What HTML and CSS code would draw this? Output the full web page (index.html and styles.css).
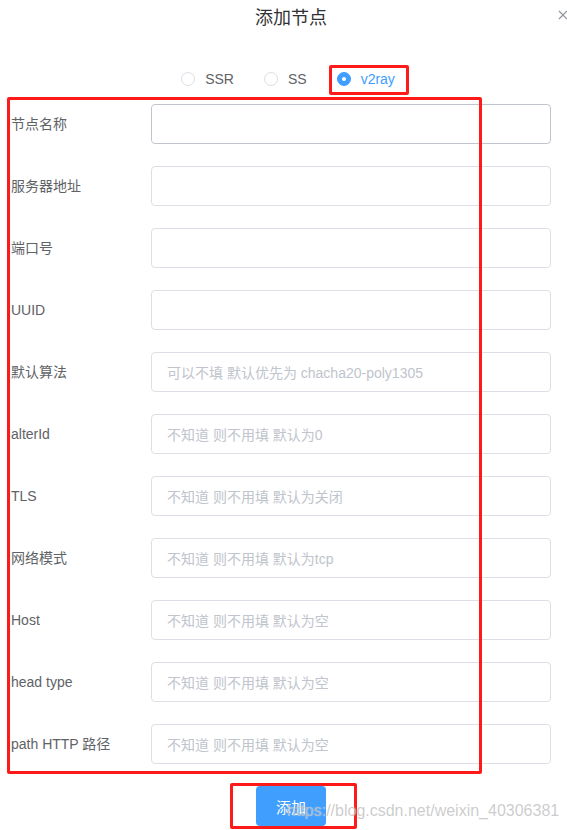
FILE: index.html
```html
<!DOCTYPE html>
<html lang="zh-CN">
<head>
<meta charset="utf-8">
<title>添加节点</title>
<link rel="stylesheet" href="styles.css">
</head>
<body>
<div class="dialog">
  <div class="header">
    <span class="title">添加节点</span>
    <span class="close"><svg width="10" height="10" viewBox="0 0 10 10"><path d="M1 1L9 9M9 1L1 9" stroke="#909399" stroke-width="1.2" fill="none"/></svg></span>
  </div>
  <div class="radios">
    <label class="radio"><span class="dot"></span><span class="rlabel">SSR</span></label>
    <label class="radio"><span class="dot"></span><span class="rlabel">SS</span></label>
    <label class="radio checked"><span class="dot"></span><span class="rlabel">v2ray</span></label>
  </div>
  <form class="form">
    <div class="item"><span class="label">节点名称</span><div class="input hover"></div></div>
    <div class="item"><span class="label">服务器地址</span><div class="input"></div></div>
    <div class="item"><span class="label">端口号</span><div class="input"></div></div>
    <div class="item"><span class="label">UUID</span><div class="input"></div></div>
    <div class="item"><span class="label">默认算法</span><div class="input"><span class="ph">可以不填 默认优先为 chacha20-poly1305</span></div></div>
    <div class="item"><span class="label">alterId</span><div class="input"><span class="ph">不知道 则不用填 默认为0</span></div></div>
    <div class="item"><span class="label">TLS</span><div class="input"><span class="ph">不知道 则不用填 默认为关闭</span></div></div>
    <div class="item"><span class="label">网络模式</span><div class="input"><span class="ph">不知道 则不用填 默认为tcp</span></div></div>
    <div class="item"><span class="label">Host</span><div class="input"><span class="ph">不知道 则不用填 默认为空</span></div></div>
    <div class="item"><span class="label">head type</span><div class="input"><span class="ph">不知道 则不用填 默认为空</span></div></div>
    <div class="item"><span class="label">path HTTP 路径</span><div class="input"><span class="ph">不知道 则不用填 默认为空</span></div></div>
  </form>
  <div class="footer"><button class="btn" type="button">添加</button></div>
</div>
<div class="mark mark-radio"></div>
<div class="mark mark-form"></div>
<div class="mark mark-btn"></div>
<div class="watermark">https://blog.csdn.net/weixin_40306381</div>
</body>
</html>
```
FILE: styles.css
```css
html, body {
  margin: 0;
  padding: 0;
  background: #fff;
  overflow: hidden;
}
body {
  font-family: "Liberation Sans", "Noto Sans CJK SC", sans-serif;
  color: #606266;
  width: 567px;
  height: 830px;
  position: relative;
}
.dialog {
  width: 582px;
}
.header {
  position: relative;
  height: 30px;
  padding-top: 6px;
  box-sizing: border-box;
  text-align: center;
}
.title {
  display: inline-block;
  font-size: 18px;
  line-height: 24px;
  color: #303133;
}
.close {
  position: absolute;
  left: 558px;
  top: 10px;
  width: 10px;
  height: 10px;
  display: block;
}
.close svg { display: block; }
.radios {
  margin-top: 39px;
  height: 20px;
  display: flex;
  justify-content: center;
  padding-right: 6px;
}
.radio {
  display: flex;
  align-items: center;
  margin-right: 30px;
  font-size: 14px;
  line-height: 20px;
  color: #606266;
}
.radio:last-child { margin-right: 0; }
.dot {
  width: 14px;
  height: 14px;
  box-sizing: border-box;
  border: 1px solid #dcdfe6;
  border-radius: 50%;
  background: #fff;
  position: relative;
}
.rlabel { padding-left: 10px; }
.checked .dot {
  background: #409eff;
  border-color: #409eff;
}
.checked .dot::after {
  content: "";
  position: absolute;
  width: 4px;
  height: 4px;
  border-radius: 50%;
  background: #fff;
  left: 4px;
  top: 4px;
}
.checked .rlabel { color: #409eff; }
.form {
  margin: 15px 0 0 0;
  padding-left: 11px;
}
.item {
  display: flex;
  align-items: center;
  height: 40px;
  margin-bottom: 22px;
}
.label {
  width: 140px;
  flex: none;
  font-size: 14px;
  line-height: 40px;
  color: #606266;
  white-space: nowrap;
}
.input {
  width: 400px;
  height: 40px;
  box-sizing: border-box;
  border: 1px solid #dcdfe6;
  border-radius: 4px;
  padding-left: 15px;
  display: flex;
  align-items: center;
}
.input.hover { border-color: #c0c4cc; }
.ph {
  font-size: 14px;
  color: #c0c4cc;
  white-space: nowrap;
}
.footer {
  text-align: center;
  height: 40px;
}
.btn {
  width: 70px;
  height: 40px;
  border: none;
  border-radius: 4px;
  background: #409eff;
  color: #fff;
  font-family: "Liberation Sans", "Noto Sans CJK SC", sans-serif;
  font-size: 15px;
  padding: 0;
}
.mark {
  position: absolute;
  border: 3px solid #ff1a1a;
  border-radius: 2px;
  box-sizing: border-box;
}
.mark-radio { left: 329px; top: 65px; width: 80px; height: 30px; }
.mark-form { left: 7px; top: 97px; width: 475px; height: 677px; }
.mark-btn { left: 230px; top: 783px; width: 127px; height: 46px; }
.watermark {
  position: absolute;
  left: 287px;
  top: 800px;
  font-size: 16px;
  line-height: 22px;
  color: rgba(170, 170, 170, 0.6);
  text-shadow: 0 0 1px rgba(255, 255, 255, 0.7);
  white-space: nowrap;
}
```
